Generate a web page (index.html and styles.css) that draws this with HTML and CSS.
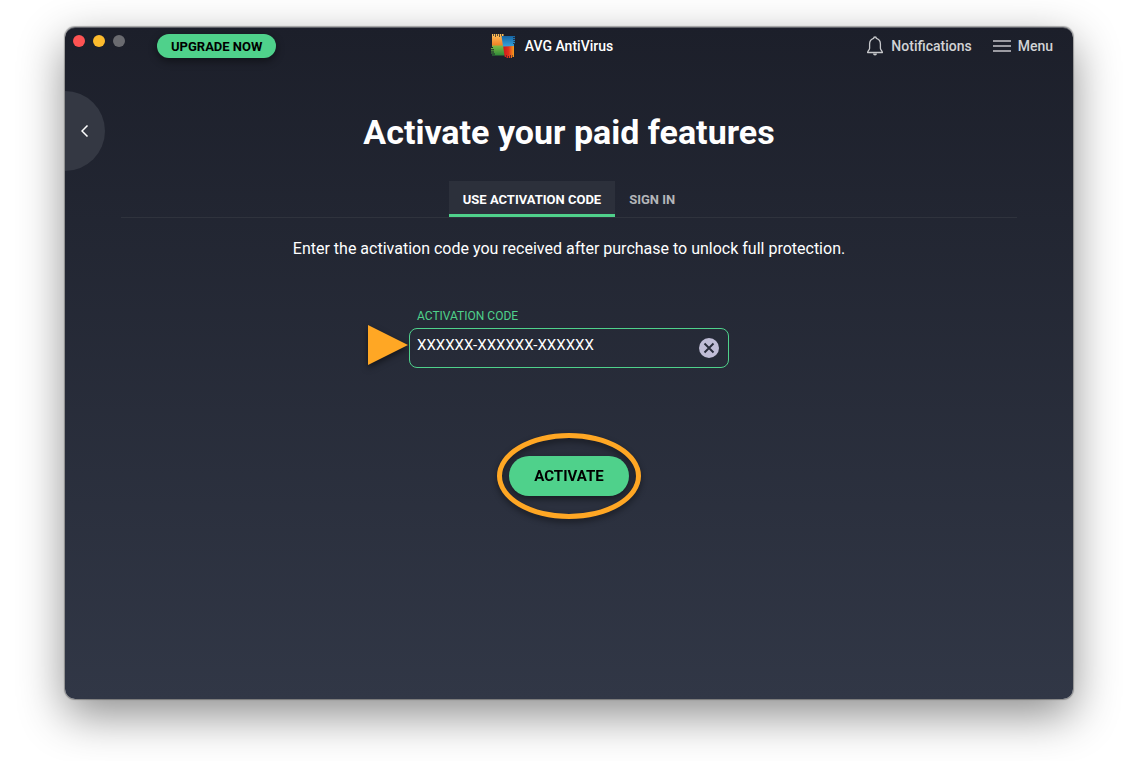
FILE: index.html
```html
<!DOCTYPE html>
<html lang="en">
<head>
<meta charset="utf-8">
<meta name="viewport" content="width=device-width, initial-scale=1">
<title>AVG AntiVirus</title>
<link rel="stylesheet" href="styles.css">
</head>
<body>
<div class="window">
  <header class="titlebar">
    <div class="titlebar-left">
      <div class="lights">
        <span class="light light-close"></span>
        <span class="light light-minimize"></span>
        <span class="light light-zoom"></span>
      </div>
      <button type="button" class="upgrade">UPGRADE NOW</button>
    </div>
    <div class="brand">
      <svg class="brand-logo" width="24" height="24" viewBox="0 0 24 24" aria-hidden="true">
        <defs>
          <linearGradient id="lg-orange" x1="0" y1="0" x2="0" y2="1"><stop offset="0" stop-color="#ffc45c"/><stop offset="1" stop-color="#ef7b22"/></linearGradient>
          <linearGradient id="lg-blue" x1="0" y1="0" x2="0" y2="1"><stop offset="0" stop-color="#1766a5"/><stop offset="1" stop-color="#35a3dc"/></linearGradient>
          <linearGradient id="lg-green" x1="0" y1="0" x2="0" y2="1"><stop offset="0" stop-color="#7fbc46"/><stop offset="1" stop-color="#2f8a38"/></linearGradient>
          <linearGradient id="lg-red" x1="0" y1="0" x2="1" y2="0"><stop offset="0" stop-color="#c9151b"/><stop offset="0.5" stop-color="#e2301c"/><stop offset="1" stop-color="#f5a01e"/></linearGradient>
        </defs>
        <path fill="url(#lg-orange)" d="M1 0h1.300v2H3V0h1.300v3H5V0h1.300v2H7V0h1.300v3H9V0h1.300v2h.7V0h1.500v12H1z"/>
        <path fill="url(#lg-green)" d="M1 11.500h12.500l1 10H1v-1h3v-1H0v-1h3v-1H0v-1.200h3v-1H0v-1.200h2v-1H1z"/>
        <path fill="url(#lg-red)" d="M12 11h11v12h-1.500v-2H21v3h-1.300v-3H19v3h-1.300v-2H17v2h-1.500v-3H15v2h-1.300z"/>
        <path fill="url(#lg-blue)" d="M10.500 2H24v1.200h-2v.8h2v1.200h-2V6h2v1.200h-1.500V8H24v1.200h-2v.8h1v2l-11 .5z"/>
      </svg>
      <span>AVG AntiVirus</span>
    </div>
    <nav class="titlebar-right" aria-label="Application">
      <button type="button" class="nav-item">
        <svg width="18" height="20" viewBox="0 0 18 20" fill="none" stroke="#c6c7ca" stroke-width="1.3" stroke-linejoin="round" aria-hidden="true">
          <path d="M7.6 2.4a1.4 1.4 0 0 1 2.8 0C13 3.200 14.400 5.300 14.400 8v4.200c0 1.600 1.900 2.600 2 4.300H1.600c.1-1.700 2-2.700 2-4.300V8c0-2.700 1.400-4.800 4-5.600z"/>
          <path d="M7 17.500h4a2 1.900 0 0 1-4 0z" fill="#c6c7ca" stroke="none"/>
        </svg>
        <span>Notifications</span>
      </button>
      <button type="button" class="nav-item">
        <svg width="18" height="12" viewBox="0 0 18 12" fill="#9b9ba2" aria-hidden="true">
          <path d="M0 0h18v2H0zM0 5h18v2H0zM0 10h18v2H0z"/>
        </svg>
        <span>Menu</span>
      </button>
    </nav>
  </header>

  <button type="button" class="back" aria-label="Back">
    <svg width="8" height="12" viewBox="0 0 8 12" fill="none" stroke="#fff" stroke-width="1.5" aria-hidden="true"><path d="M6.500 .5L1 6l5.500 5.500"/></svg>
  </button>

  <main class="content">
    <h1 class="heading">Activate your paid features</h1>
    <div class="tabs" role="tablist">
      <button type="button" class="tab tab-active" role="tab" aria-selected="true">USE ACTIVATION CODE</button>
      <button type="button" class="tab" role="tab" aria-selected="false">SIGN IN</button>
    </div>
    <p class="intro">Enter the activation code you received after purchase to unlock full protection.</p>
    <form class="form">
      <label class="label" for="code">ACTIVATION CODE</label>
      <div class="field">
        <svg class="pointer" width="40" height="40" viewBox="0 0 40 40" aria-hidden="true"><path fill="#ffa724" d="M0 0l40 20L0 40z"/></svg>
        <input class="input" id="code" type="text" value="XXXXXX-XXXXXX-XXXXXX" spellcheck="false">
        <button type="button" class="clear" aria-label="Clear">
          <svg width="20" height="20" viewBox="0 0 20 20" aria-hidden="true"><circle cx="10" cy="10" r="10" fill="#c0bdd6"/><path d="M5.500 5.500l9 9M14.500 5.500l-9 9" stroke="#282c3a" stroke-width="1.900"/></svg>
        </button>
      </div>
      <div class="submit-ring">
        <button type="button" class="submit">ACTIVATE</button>
      </div>
    </form>
  </main>
</div>
</body>
</html>
```
FILE: styles.css
```css
* {
  box-sizing: border-box;
}

body {
  margin: 0;
  min-height: 100vh;
  padding: 27px 59px 62px 65px;
  display: flex;
  flex-direction: column;
  background: #fff;
  color: #fff;
  font-family: Roboto, "Liberation Sans", sans-serif;
}

button {
  margin: 0;
  padding: 0;
  border: 0;
  background: none;
  color: inherit;
  font: inherit;
  cursor: pointer;
}

svg {
  display: block;
}

.window {
  position: relative;
  flex: 1;
  border-radius: 10px;
  background: linear-gradient(#1c1f2a, #313746);
  box-shadow:
    inset 0 1px 0 rgba(255, 255, 255, 0.3),
    0 0 1px 1px rgba(0, 0, 0, 0.3),
    0 16px 46px rgba(0, 0, 0, 0.45);
}

.titlebar {
  display: grid;
  grid-template-columns: 1fr auto 1fr;
  height: 38px;
}

.titlebar-left {
  display: flex;
  align-items: flex-start;
  gap: 32px;
  padding: 7px 8px;
}

.lights {
  display: flex;
  gap: 8px;
  padding-top: 1px;
}

.light {
  width: 12px;
  height: 12px;
  border-radius: 50%;
}

.light-close {
  background: #fe5353;
}

.light-minimize {
  background: #fdbb2d;
}

.light-zoom {
  background: #6a6b70;
}

.upgrade {
  height: 24px;
  padding: 0 14px;
  border-radius: 12px;
  background: #4fd18b;
  box-shadow: 0 3px 8px rgba(0, 0, 0, 0.45);
  color: #000;
  font-size: 13px;
  font-weight: 700;
}

.brand {
  display: flex;
  align-items: center;
  gap: 10px;
  padding-right: 34px;
  font-size: 14px;
  font-weight: 500;
}

.titlebar-right {
  display: flex;
  align-items: center;
  justify-content: flex-end;
  gap: 21px;
  padding-right: 20px;
  color: #d2d3d5;
  font-size: 14px;
  font-weight: 500;
}

.nav-item {
  display: flex;
  align-items: center;
  gap: 7px;
}

.back {
  position: absolute;
  top: 64px;
  left: 0;
  display: flex;
  align-items: center;
  justify-content: center;
  width: 40px;
  height: 80px;
  border-radius: 0 40px 40px 0;
  background: #343843;
}

.content {
  display: flex;
  flex-direction: column;
  align-items: center;
  padding: 46px 56px;
}

.heading {
  margin: 0 0 28px;
  font-size: 34px;
  font-weight: 700;
  line-height: 42px;
  text-align: center;
}

.tabs {
  display: flex;
  align-self: stretch;
  justify-content: center;
  border-bottom: 1px solid #2f333d;
}

.tab {
  height: 36px;
  padding: 3px 14px 0;
  border-bottom: 3px solid transparent;
  color: #b4b5b9;
  font-size: 13px;
  font-weight: 700;
}

.tab-active {
  border-bottom-color: #4fd18b;
  background: #2c303b;
  color: #fff;
}

.intro {
  margin: 19px 0 47px;
  font-size: 16px;
  line-height: 24px;
  text-align: center;
}

.form {
  display: flex;
  flex-direction: column;
  width: 320px;
  max-width: 100%;
}

.label {
  padding: 0 8px;
  margin-bottom: 4px;
  color: #4fd18b;
  font-size: 12px;
  line-height: 16px;
}

.field {
  position: relative;
  display: flex;
  align-items: center;
  height: 40px;
  padding: 0 9px 0 7px;
  border: 1px solid #4fd18b;
  border-radius: 8px;
}

.pointer {
  position: absolute;
  top: -4px;
  right: 100%;
  margin-right: 2px;
  overflow: visible;
  filter: drop-shadow(0 3px 3px rgba(0, 0, 0, 0.5));
}

.input {
  flex: 1;
  min-width: 0;
  height: 100%;
  padding: 0 0 6px;
  border: 0;
  outline: 0;
  background: none;
  color: #fff;
  font: inherit;
  font-size: 15px;
}

.submit-ring {
  align-self: center;
  display: flex;
  margin-top: 65px;
  padding: 18px 7px;
  border: 5px solid #ffa724;
  border-radius: 50%;
  filter: drop-shadow(0 3px 3px rgba(0, 0, 0, 0.45));
}

.submit {
  width: 120px;
  height: 40px;
  border-radius: 20px;
  background: #4fd18b;
  color: #000;
  font-size: 15px;
  font-weight: 700;
}
```
